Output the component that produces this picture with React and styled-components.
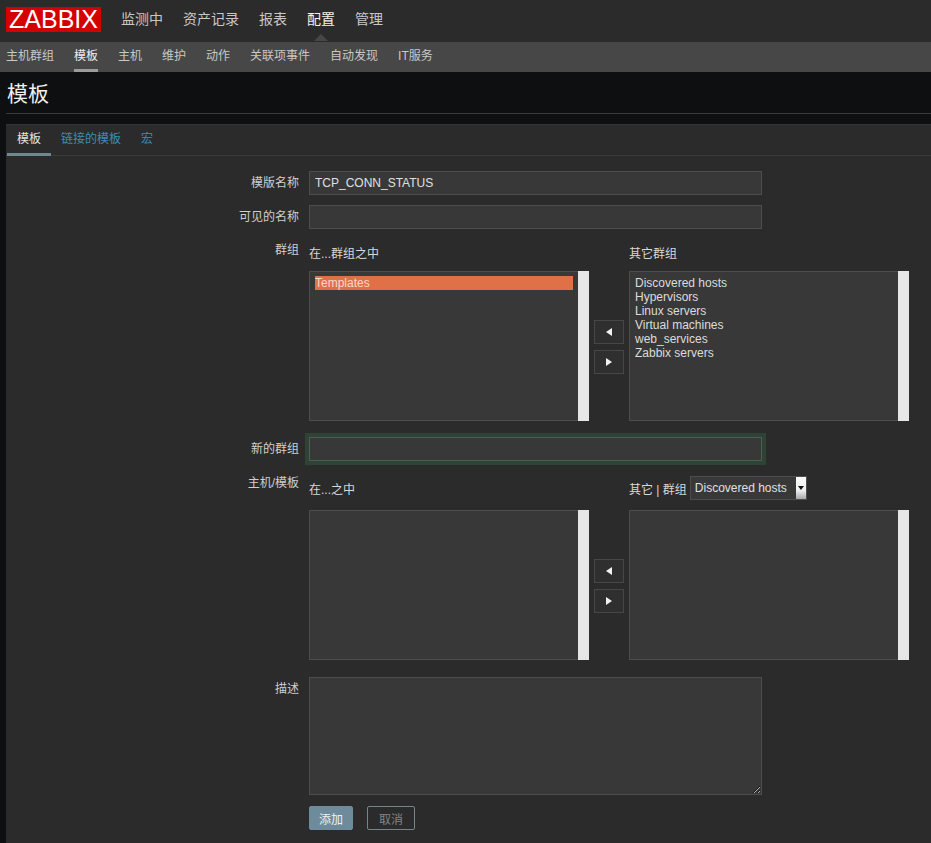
import React from 'react'
import styled, { createGlobalStyle } from 'styled-components'

const Global = createGlobalStyle`
  html, body {
    margin: 0;
    padding: 0;
    height: 843px;
    overflow: hidden;
    background: #0e0f10;
    font-family: "Liberation Sans", "Noto Sans CJK SC", sans-serif;
    font-size: 12px;
    color: #d4d4d4;
  }
`;

const TopBar = styled.div`
  height: 42px;
  background: #2b2b2b;
  display: flex;
  align-items: center;
  padding-left: 6px;
`;

const Logo = styled.div`
  width: 95px;
  height: 25px;
  margin: -3px 20px 0 0;
  background: #d40000;
  color: #fff;
  font-size: 25px;
  line-height: 25px;
  text-align: center;
`;

const MainMenu = styled.div`
  display: flex;
  gap: 20px;
  margin-top: -4px;
`;

const MainItem = styled.span`
  position: relative;
  font-size: 14px;
  line-height: 20px;
  color: ${p => (p.$active ? '#f2f2f2' : '#c8c8c8')};

  ${p => p.$active && `
    &::after {
      content: '';
      position: absolute;
      left: 50%;
      bottom: -12px;
      margin-left: -7px;
      border-left: 7px solid transparent;
      border-right: 7px solid transparent;
      border-bottom: 7px solid #474747;
    }
  `}
`;

const SubBar = styled.div`
  height: 30px;
  background: #474747;
  display: flex;
  gap: 20px;
  padding-left: 6px;
`;

const SubItem = styled.span`
  height: 27px;
  line-height: 29px;
  color: ${p => (p.$active ? '#ededed' : '#c8c8c8')};
  border-bottom: 3px solid ${p => (p.$active ? '#9c9c9c' : 'transparent')};
`;

const Header = styled.div`
  height: 41px;
  margin-left: 6px;
  border-bottom: 1px solid #3a3a3a;
  margin-bottom: 10px;
`;

const Title = styled.h1`
  margin: 0 0 0 1px;
  font-size: 21px;
  font-weight: 400;
  line-height: 44px;
  color: #f0f0f0;
`;

const Card = styled.div`
  margin-left: 6px;
  height: 719px;
  background: #2b2b2b;
  border-top: 1px solid #353535;
`;

const Tabs = styled.div`
  height: 30px;
  padding-left: 1px;
  display: flex;
  border-bottom: 1px solid #3b3b3b;
`;

const Tab = styled.span`
  height: 28px;
  line-height: 29px;
  padding: 0 10px;
  color: ${p => (p.$active ? '#e4e4e4' : '#3f8cb6')};
  border-bottom: 3px solid ${p => (p.$active ? '#6f8790' : 'transparent')};
`;

const Form = styled.div`
  padding-top: 15px;
`;

const Row = styled.div`
  display: flex;
  align-items: ${p => (p.$center ? 'center' : 'flex-start')};
  gap: 10px;
  margin-top: ${p => p.$top || 0}px;
`;

const Label = styled.div`
  width: 293px;
  flex: none;
  text-align: right;
  line-height: 14px;
  padding-top: ${p => p.$pad || 0}px;
  color: #cfcfcf;
`;

const TextInput = styled.input`
  box-sizing: border-box;
  display: block;
  width: 453px;
  height: 24px;
  padding: 0 5px;
  border: 1px solid ${p => (p.$focus ? '#48614f' : '#4d4d4d')};
  background: #383838;
  color: #e0e0e0;
  font: 12px "Liberation Sans", "Noto Sans CJK SC", sans-serif;
  outline: none;
  box-shadow: ${p => (p.$focus ? '0 0 0 4px #2e4236' : 'none')};
`;

const TextArea = styled.textarea`
  box-sizing: border-box;
  display: block;
  width: 453px;
  height: 118px;
  margin: 0;
  border: 1px solid #4d4d4d;
  background: #383838;
  outline: none;
`;

const HeadRow = styled.div`
  display: flex;
  gap: 40px;
  height: 24px;
  margin-bottom: ${p => p.$gap}px;
`;

const Head = styled.div`
  width: 280px;
  display: flex;
  align-items: center;
  color: #d8d8d8;
`;

const FakeSelect = styled.div`
  box-sizing: border-box;
  width: 117px;
  height: 24px;
  margin-left: 3px;
  padding-left: 4px;
  display: flex;
  align-items: center;
  justify-content: space-between;
  background: #383838;
  border: 1px solid #4d4d4d;
  color: #e0e0e0;
`;

const SelectArrow = styled.span`
  width: 10px;
  height: 22px;
  display: flex;
  align-items: center;
  justify-content: center;
  background: linear-gradient(#fafafa, #f0f0f0 60%, #a8a8a8);

  &::after {
    content: '';
    border-left: 3px solid transparent;
    border-right: 3px solid transparent;
    border-top: 4px solid #111;
  }
`;

const ListRow = styled.div`
  display: flex;
`;

const ListBox = styled.div`
  box-sizing: border-box;
  width: 280px;
  height: 150px;
  display: flex;
  background: #383838;
  border: 1px solid #4d4d4d;
  border-right: 0;
`;

const ListItems = styled.div`
  flex: 1;
  padding: 4px 5px;
  line-height: 14px;
  color: #dcdcdc;
`;

const ListItem = styled.div`
  background: ${p => (p.$selected ? '#e07048' : 'transparent')};
  color: ${p => (p.$selected ? '#f7d9c8' : 'inherit')};
`;

const ScrollTrack = styled.div`
  width: 11px;
  background: #e6e6e6;
  margin-top: -1px;
  margin-bottom: -1px;
`;

const Arrows = styled.div`
  width: 40px;
  display: flex;
  flex-direction: column;
  align-items: center;
  justify-content: center;
  gap: 6px;
  padding-top: 2px;
  box-sizing: border-box;
`;

const ArrowButton = styled.button`
  box-sizing: border-box;
  width: 30px;
  height: 24px;
  padding: 0;
  display: flex;
  align-items: center;
  justify-content: center;
  background: #2f2f2f;
  border: 1px solid #474747;
`;

const Actions = styled.div`
  display: flex;
  gap: 14px;
  margin: 11px 0 0 303px;
`;

const ActionButton = styled.button`
  box-sizing: border-box;
  width: ${p => (p.$primary ? 44 : 48)}px;
  height: 24px;
  padding: 0;
  border-radius: 2px;
  font: 12px "Liberation Sans", "Noto Sans CJK SC", sans-serif;
  background: ${p => (p.$primary ? '#6d8b9b' : 'transparent')};
  color: ${p => (p.$primary ? '#f0f0f0' : '#858585')};
  border: 1px solid ${p => (p.$primary ? '#6d8b9b' : '#75848a')};
`;

const Triangle = ({ dir }) => (
  <svg width="8" height="10" viewBox="0 0 8 10">
    <path d={dir === 'left' ? 'M7 1v8L1 5z' : 'M1 1v8l6-4z'} fill="#f2f2f2" />
  </svg>
);

const Picker = ({ selected, items }) => (
  <ListBox>
    <ListItems>
      {items.map(item => (
        <ListItem key={item} $selected={item === selected}>{item}</ListItem>
      ))}
    </ListItems>
    <ScrollTrack />
  </ListBox>
);

const Transfer = ({ left = [], right = [], selected }) => (
  <ListRow>
    <Picker items={left} selected={selected} />
    <Arrows>
      <ArrowButton><Triangle dir="left" /></ArrowButton>
      <ArrowButton><Triangle dir="right" /></ArrowButton>
    </Arrows>
    <Picker items={right} />
  </ListRow>
);

const mainMenu = ['监测中', '资产记录', '报表', '配置', '管理'];
const subMenu = ['主机群组', '模板', '主机', '维护', '动作', '关联项事件', '自动发现', 'IT服务'];
const otherGroups = ['Discovered hosts', 'Hypervisors', 'Linux servers', 'Virtual machines', 'web_services', 'Zabbix servers'];

export default function App() {
  return (
    <>
      <Global />
      <TopBar>
        <Logo>ZABBIX</Logo>
        <MainMenu>
          {mainMenu.map(m => <MainItem key={m} $active={m === '配置'}>{m}</MainItem>)}
        </MainMenu>
      </TopBar>
      <SubBar>
        {subMenu.map(m => <SubItem key={m} $active={m === '模板'}>{m}</SubItem>)}
      </SubBar>
      <Header><Title>模板</Title></Header>
      <Card>
        <Tabs>
          <Tab $active>模板</Tab>
          <Tab>链接的模板</Tab>
          <Tab>宏</Tab>
        </Tabs>
        <Form>
          <Row $center>
            <Label>模版名称</Label>
            <TextInput defaultValue="TCP_CONN_STATUS" />
          </Row>
          <Row $center $top={10}>
            <Label>可见的名称</Label>
            <TextInput />
          </Row>
          <Row $top={11}>
            <Label $pad={3}>群组</Label>
            <div>
              <HeadRow $gap={7}>
                <Head>在...群组之中</Head>
                <Head>其它群组</Head>
              </HeadRow>
              <Transfer left={['Templates']} right={otherGroups} selected="Templates" />
            </div>
          </Row>
          <Row $center $top={16}>
            <Label>新的群组</Label>
            <TextInput $focus />
          </Row>
          <Row $top={15}>
            <Label>主机/模板</Label>
            <div>
              <HeadRow $gap={10}>
                <Head>在...之中</Head>
                <Head>
                  其它 | 群组
                  <FakeSelect>Discovered hosts<SelectArrow /></FakeSelect>
                </Head>
              </HeadRow>
              <Transfer />
            </div>
          </Row>
          <Row $top={17}>
            <Label $pad={5}>描述</Label>
            <TextArea />
          </Row>
          <Actions>
            <ActionButton $primary>添加</ActionButton>
            <ActionButton>取消</ActionButton>
          </Actions>
        </Form>
      </Card>
    </>
  )
}
